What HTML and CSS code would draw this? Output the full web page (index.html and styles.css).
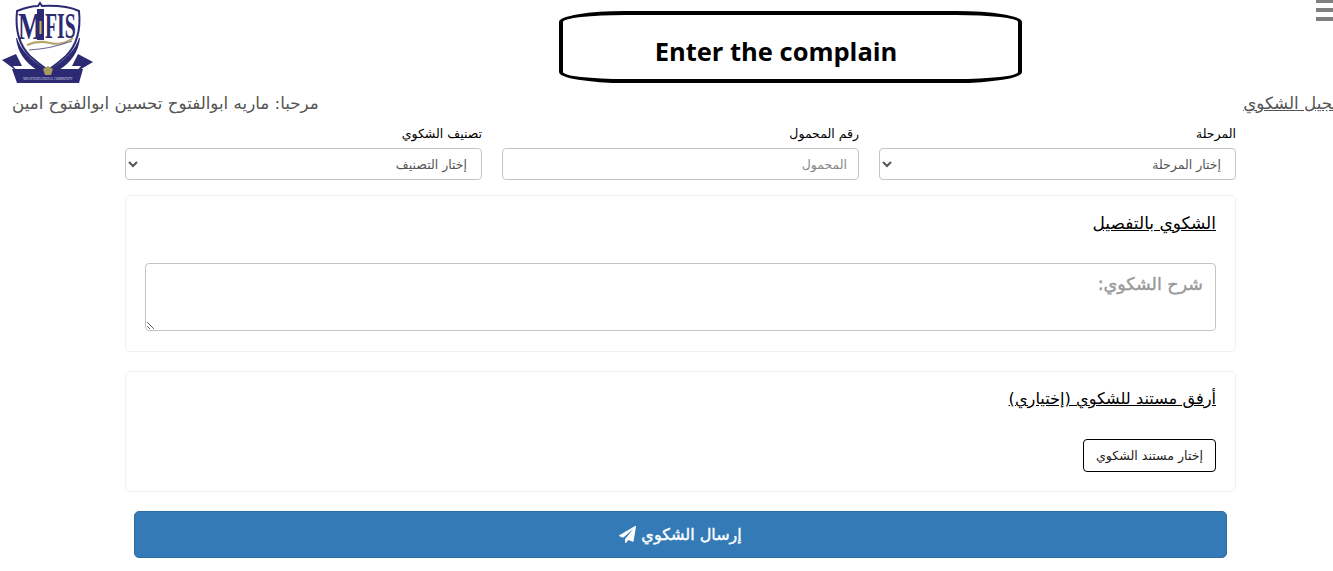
FILE: index.html
```html
<!DOCTYPE html>
<html lang="ar" dir="rtl">
<head>
    <meta charset="UTF-8">
    <title>Enter the complain</title>
    <link rel="stylesheet" href="styles.css">
</head>
<body>
<header class="top">
    <svg class="logo" viewBox="0 0 94 84" aria-label="MFIS">
        <path d="M2 60 L16 54 L22 66 L13 66 L18 72 Z" fill="#2b2a73"/>
        <path d="M93 62 L78 54 L72 66 L81 66 L76 72 Z" fill="#2b2a73"/>
        <path d="M17 11 Q30 6 38 6 L40 3 L42 6 Q66 5 79 11 Q82 40 66 56 Q56 65 48 70 Q40 65 30 56 Q14 40 17 11 Z" fill="#fff" stroke="#2b2a73" stroke-width="2"/>
        <path d="M17 38 Q22 55 47 70 L37 70 Q18 58 16 38 Z" fill="#2b2a73"/>
        <path d="M79 38 Q74 55 49 70 L59 70 Q78 58 80 38 Z" fill="#2b2a73"/>
        <path d="M27 45 Q38 40 50 43 Q62 46 73 38" fill="none" stroke="#b5a66c" stroke-width="2"/>
        <path d="M29 50 Q50 49 72 41" fill="none" stroke="#6a6a9a" stroke-width="1.2"/>
        <text transform="translate(18 39) scale(.68 1)" class="logo-m">M</text>
        <rect x="37" y="9" width="7" height="31" fill="#2b2a73"/>
        <rect x="39.5" y="21" width="2" height="13" fill="#c9b45a"/>
        <text transform="translate(45 38) scale(.55 1)" class="logo-fis">FIS</text>
        <path d="M12 69 H83 L79 83 H17 Z" fill="#2b2a73"/>
        <path d="M43 69 L48 66 L53 69 L51 75 H45 Z" fill="#a99a5e"/>
        <text x="48" y="80" class="logo-sub">MIS INTERNATIONAL COMMUNITY</text>
    </svg>
    <h1 class="title">Enter the complain</h1>
    <div class="bars"><span></span><span></span><span></span></div>
</header>

<div class="welcome-row">
    <a class="link" href="#">تسجيل الشكوي</a>
    <span class="welcome">مرحبا: ماريه ابوالفتوح تحسين ابوالفتوح امين</span>
</div>

<form class="wrap">
    <div class="fields">
        <div class="field">
            <label>المرحلة</label>
            <select class="control"><option>إختار المرحلة</option></select>
        </div>
        <div class="field">
            <label>رقم المحمول</label>
            <input class="control" type="text" placeholder="المحمول">
        </div>
        <div class="field">
            <label>تصنيف الشكوي</label>
            <select class="control"><option>إختار التصنيف</option></select>
        </div>
    </div>

    <section class="card card-text">
        <h2>الشكوي بالتفصيل</h2>
        <textarea placeholder="شرح الشكوي:"></textarea>
    </section>

    <section class="card card-file">
        <h2>أرفق مستند للشكوي (إختياري)</h2>
        <button class="file-btn" type="button">إختار مستند الشكوي</button>
    </section>

    <button class="send" type="button">
        إرسال الشكوي
        <svg viewBox="0 0 1792 1792"><path d="M1764 11q33 24 27 64l-256 1536q-5 29-32 45-14 8-31 8-11 0-24-5l-453-185-242 295q-18 23-49 23-13 0-22-4-19-7-30.5-23.5t-11.5-36.5v-349l864-1059-1069 925-395-162q-37-14-40-55-2-40 32-59l1664-960q15-9 32-9 20 0 36 11z"/></svg>
    </button>
</form>
</body>
</html>
```

FILE: styles.css
```css
* {
    margin: 0;
    padding: 0;
    box-sizing: border-box;
}
html, body {
    overflow: hidden;
}
body {
    height: 571px;
    background: #fff;
    color: #000;
    font-family: "DejaVu Sans", sans-serif;
}
.top {
    direction: ltr;
    display: grid;
    grid-template-columns: 559px 463px 1fr;
    height: 90px;
}
.logo {
    width: 94px;
    height: 84px;
}
.logo-m {
    font: bold 38px "Liberation Serif", serif;
    fill: #2b2a73;
}
.logo-fis {
    font: bold 36px "Liberation Serif", serif;
    fill: #2b2a73;
}
.logo-sub {
    font: 3px "Liberation Serif", serif;
    fill: #d8d8e8;
    text-anchor: middle;
}
.title {
    height: 72px;
    margin-top: 11px;
    padding-right: 29px;
    border: 4px solid #000;
    border-radius: 66px / 11px;
    font: bold 25.5px/73px "Open Sans", sans-serif;
    text-align: center;
}
.bars {
    display: flex;
    flex-direction: column;
    gap: 5px;
    margin-top: -1px;
    margin-left: 294px;
}
.bars span {
    display: block;
    width: 20px;
    height: 4px;
    background: #808080;
}
.welcome-row {
    display: flex;
    justify-content: space-between;
    align-items: center;
    height: 26px;
    padding-left: 12px;
    font-size: 16.7px;
    color: #555;
}
.link {
    color: #555;
    margin-right: -19px;
}
.wrap {
    margin: 0 97px 0 125px;
    padding-top: 9px;
}
.fields {
    display: grid;
    grid-template-columns: repeat(3, 357px);
    gap: 20px;
}
.field label {
    display: block;
    height: 17px;
    font-size: 12.5px;
    line-height: 17px;
    margin-bottom: 6px;
}
.control {
    display: block;
    width: 100%;
    height: 32px;
    padding: 0 10px;
    border: 1px solid #c4c4c4;
    border-radius: 4px;
    background: #fff;
    color: #555;
    font: 12.5px "DejaVu Sans", sans-serif;
}
input.control {
    padding: 0 11px;
}
input.control::placeholder {
    color: #888;
}
.card {
    border: 1px solid #f1f1f1;
    border-radius: 5px;
    padding: 0 19px;
    margin-top: 15px;
}
.card h2 {
    font-size: 17px;
    font-weight: normal;
    text-decoration: underline;
    line-height: 20px;
}
.card-file h2 {
    font-size: 16.2px;
}
.card-text {
    height: 157px;
    padding-top: 17px;
}
.card-text textarea {
    display: block;
    width: 100%;
    height: 68px;
    margin-top: 30px;
    padding: 10px 12px;
    border: 1px solid #c4c4c4;
    border-radius: 4px;
    font: 17.5px "DejaVu Sans", sans-serif;
}
.card-text textarea::placeholder {
    color: #999;
    -webkit-text-stroke: 0.4px #999;
}
.card-file {
    height: 121px;
    margin-top: 19px;
    padding-top: 17px;
}
.file-btn {
    display: block;
    height: 33px;
    margin-top: 30px;
    padding: 0 12px;
    border: 1px solid #000;
    border-radius: 4px;
    background: #fff;
    color: #222;
    font: 12.6px "DejaVu Sans", sans-serif;
}
.send {
    display: block;
    width: 1093px;
    height: 47px;
    margin: 19px 9px 0;
    border: 1px solid #2e6da4;
    border-radius: 5px;
    background: #337ab7;
    color: #fff;
    font: 16px "DejaVu Sans", sans-serif;
    -webkit-text-stroke: 0.4px #fff;
}
.send svg {
    width: 17px;
    height: 17px;
    fill: #fff;
    vertical-align: -3px;
}
```
